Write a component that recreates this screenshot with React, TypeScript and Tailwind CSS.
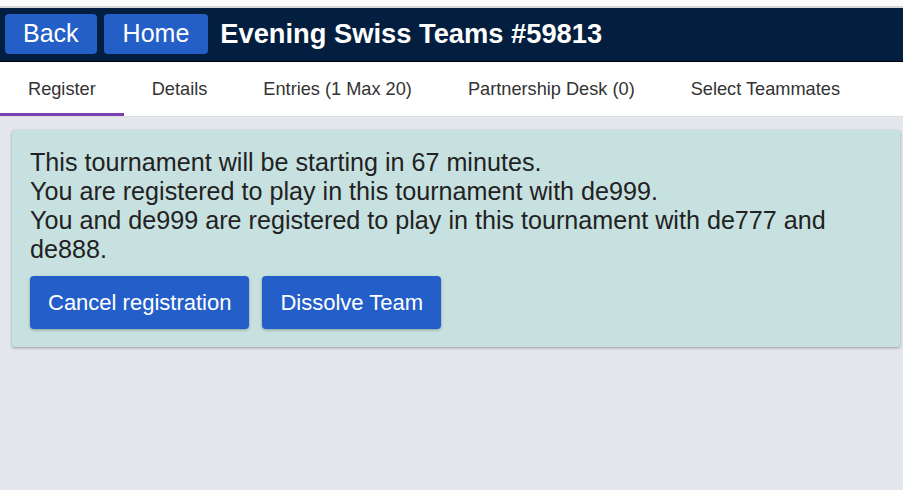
const TABS = [
  "Register",
  "Details",
  "Entries (1 Max 20)",
  "Partnership Desk (0)",
  "Select Teammates",
];

const MESSAGES = [
  "This tournament will be starting in 67 minutes.",
  "You are registered to play in this tournament with de999.",
  "You and de999 are registered to play in this tournament with de777 and de888.",
];

const App = () => {
  return (
    <div
      className="bg-[#e4e7eb] min-h-[490px] w-[903px]"
      style={{ fontFamily: '"Liberation Sans", Arial, sans-serif' }}
    >
      <div className="bg-[#fbfbfb] h-[6px]" />
      <div className="bg-[#031e3e] border-b border-black border-t-2 border-t-[#d6d8dc] flex h-[56px] items-start pt-[6px] px-[5px]">
        <button className="bg-[#245fc7] h-[40px] px-[18px] rounded-[4px] text-[25px] text-white">
          Back
        </button>
        <button className="bg-[#245fc7] h-[40px] ml-[7px] px-[19px] rounded-[4px] text-[25px] text-white">
          Home
        </button>
        <h1 className="font-bold leading-[40px] ml-[12px] text-[27.3px] text-white">
          Evening Swiss Teams #59813
        </h1>
      </div>
      <div className="bg-white border-b border-[#dcdee2] flex h-[55px]">
        {TABS.map((tab, i) => (
          <div
            key={tab}
            className={
              i === 0
                ? "border-b-[3px] border-[#7a3fb0] flex items-center pt-[5px] px-[28px] text-[#333] text-[18.2px]"
                : "border-b-[3px] border-transparent flex items-center pt-[5px] px-[28px] text-[#333] text-[18.2px]"
            }
          >
            {tab}
          </div>
        ))}
      </div>
      <div className="pl-[12px] pr-[3px] pt-[13px]">
        <div className="bg-[#c7e1e0] px-[18px] py-[18px] rounded-[3px] shadow-[0_1px_3px_rgba(0,0,0,0.35)]">
          <div className="leading-[29px] text-[#222] text-[25.15px]">
            {MESSAGES.map((m) => (
              <p key={m}>{m}</p>
            ))}
          </div>
          <div className="flex gap-[13px] mt-[12px]">
            <button className="bg-[#245fc9] h-[53px] px-[18px] rounded-[4px] shadow-[0_1px_3px_rgba(0,0,0,0.3)] text-[22px] text-white">
              Cancel registration
            </button>
            <button className="bg-[#245fc9] h-[53px] px-[18px] rounded-[4px] shadow-[0_1px_3px_rgba(0,0,0,0.3)] text-[22px] text-white">
              Dissolve Team
            </button>
          </div>
        </div>
      </div>
    </div>
  );
};

export default App;
